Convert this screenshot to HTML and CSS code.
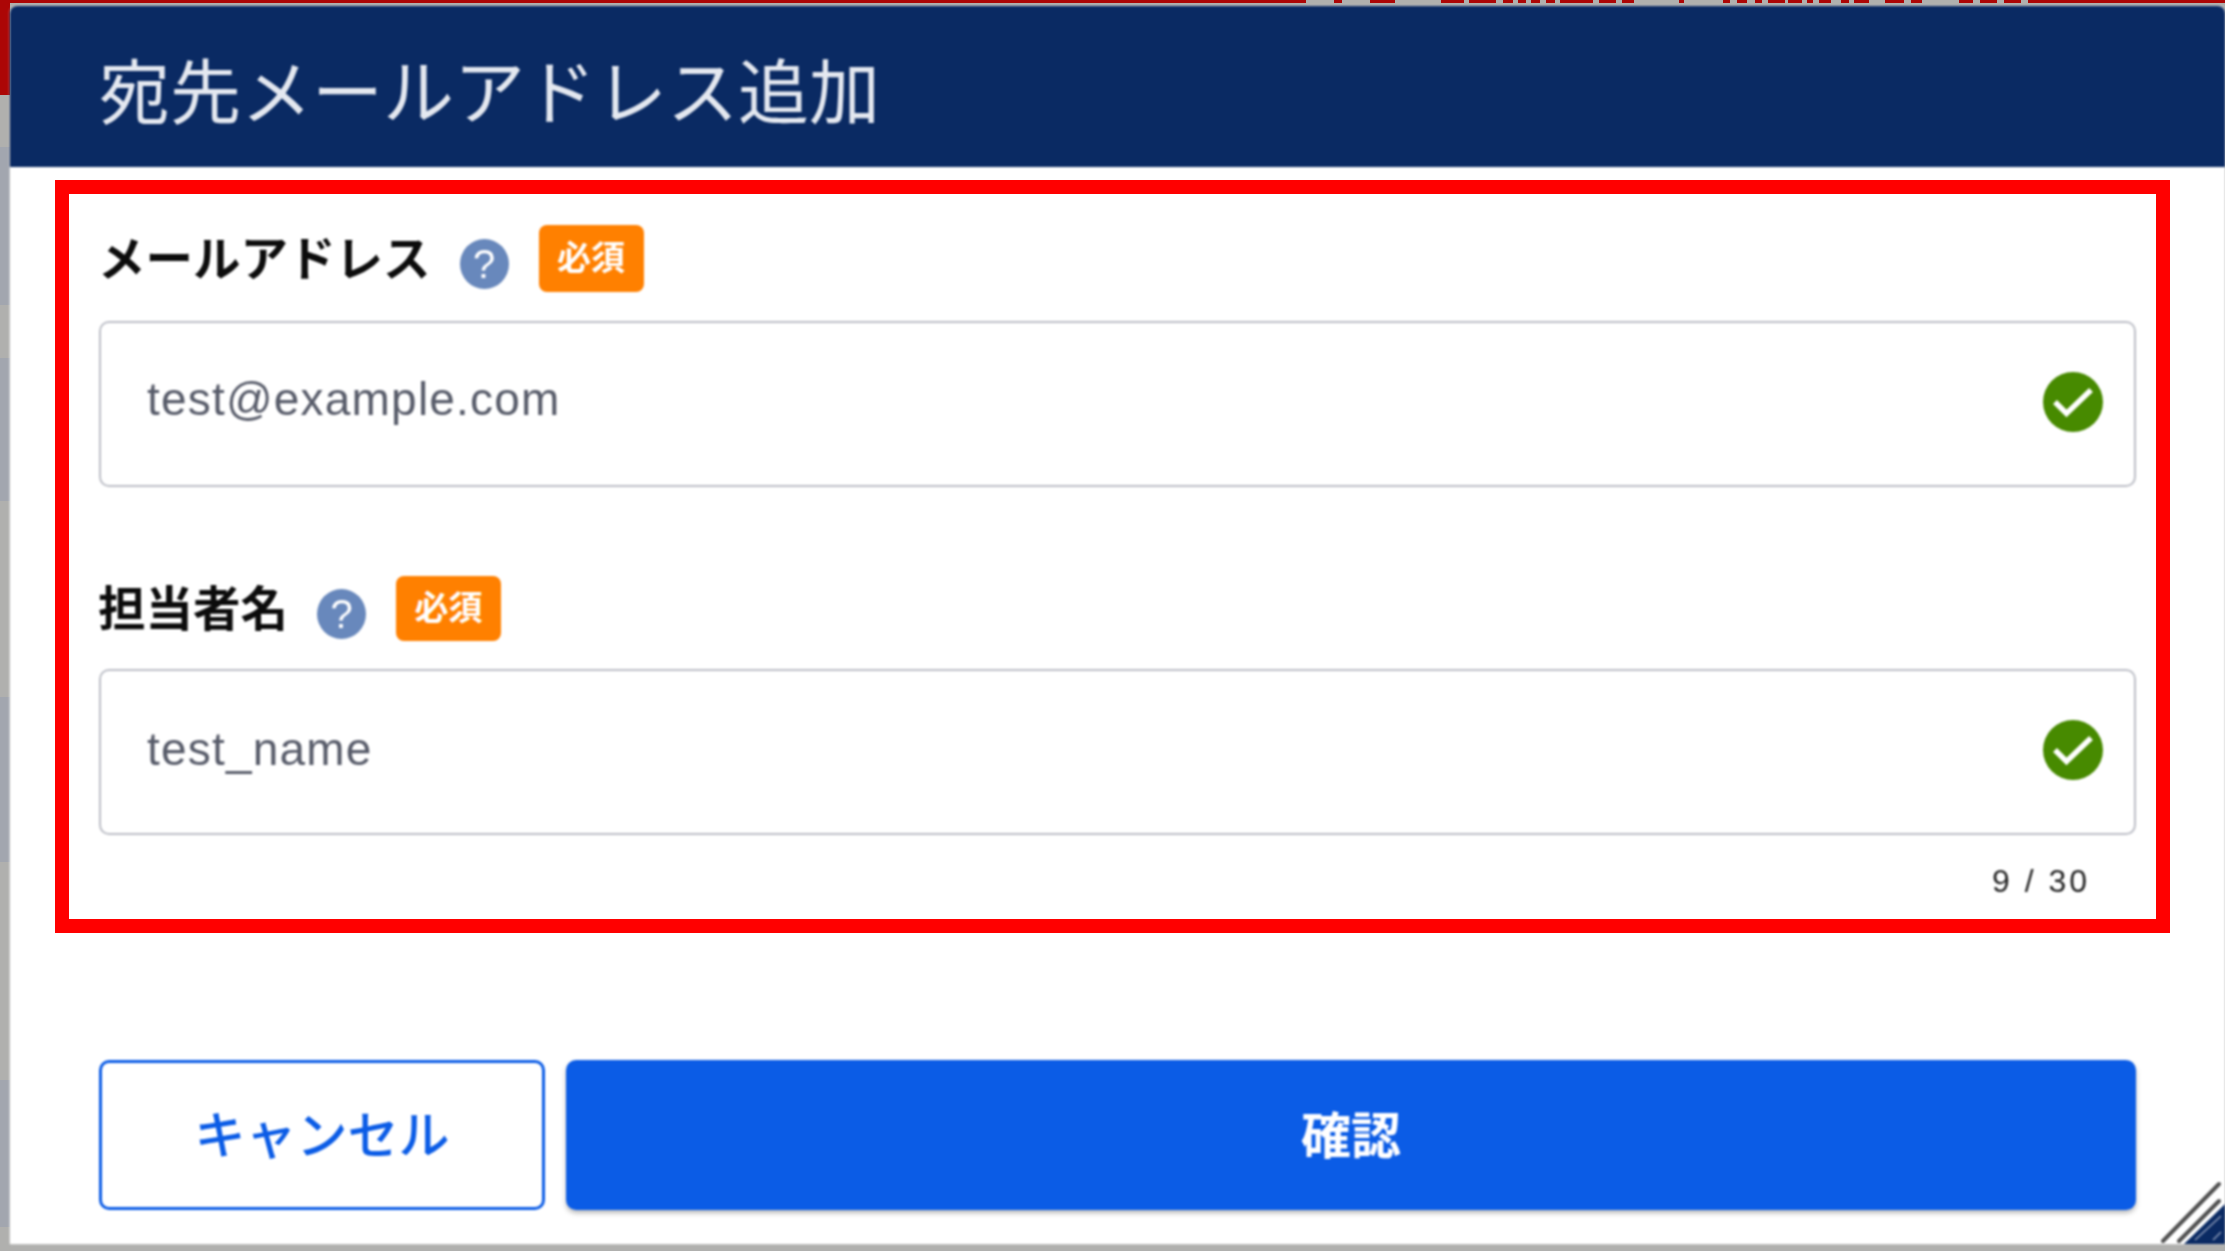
FILE: index.html
```html
<!DOCTYPE html>
<html lang="ja">
<head>
<meta charset="utf-8">
<title>宛先メールアドレス追加</title>
<link rel="stylesheet" href="styles.css">
</head>
<body>
<div class="screen">
  <svg class="backdrop" width="2225" height="1251" viewBox="0 0 2225 1251" aria-hidden="true">
    <rect width="2225" height="1251" fill="#b0b0ae"/>
    <g fill="#a2a6af">
      <rect y="147" width="10" height="158"/>
      <rect y="358" width="10" height="143"/>
      <rect y="697" width="10" height="165"/>
      <rect y="1080" width="10" height="147"/>
    </g>
    <g fill="#ac0606">
      <rect width="10" height="95"/>
      <rect width="1306" height="3"/>
      <rect x="1334" width="8" height="3"/><rect x="1370" width="25" height="3"/><rect x="1441" width="23" height="3"/>
      <rect x="1469" width="27" height="3"/><rect x="1503" width="10" height="3"/><rect x="1518" width="8" height="3"/>
      <rect x="1531" width="9" height="3"/><rect x="1546" width="9" height="3"/><rect x="1560" width="33" height="3"/>
      <rect x="1599" width="17" height="3"/><rect x="1622" width="12" height="3"/><rect x="1679" width="5" height="3"/>
      <rect x="1723" width="7" height="3"/><rect x="1737" width="10" height="3"/><rect x="1755" width="7" height="3"/>
      <rect x="1768" width="17" height="3"/><rect x="1788" width="14" height="3"/><rect x="1807" width="6" height="3"/>
      <rect x="1819" width="12" height="3"/><rect x="1841" width="8" height="3"/><rect x="1854" width="15" height="3"/>
      <rect x="1885" width="19" height="3"/><rect x="1911" width="11" height="3"/><rect x="1959" width="14" height="3"/>
      <rect x="1980" width="17" height="3"/><rect x="2004" width="17" height="3"/><rect x="2028" width="197" height="3"/>
    </g>
  </svg>

  <section class="dialog">
    <header class="dialog-head">
      <h1 class="dialog-title">宛先メールアドレス追加</h1>
    </header>
    <form class="dialog-body">
      <div class="field field-mail">
        <div class="label-row">
          <label class="label">メールアドレス</label>
          <span class="help">?</span>
          <span class="badge">必須</span>
        </div>
        <div class="input-box">
          <input class="input" type="text" value="test@example.com">
          <svg class="check" width="60" height="60" viewBox="0 0 60 60" aria-hidden="true">
            <circle cx="30" cy="30" r="30" fill="#478a00"/>
            <path d="M12 30 L23.500 41.500 L48 18" fill="none" stroke="#fff" stroke-width="5.500"/>
          </svg>
        </div>
      </div>
      <div class="field field-name">
        <div class="label-row">
          <label class="label">担当者名</label>
          <span class="help">?</span>
          <span class="badge">必須</span>
        </div>
        <div class="input-box">
          <input class="input" type="text" value="test_name">
          <svg class="check" width="60" height="60" viewBox="0 0 60 60" aria-hidden="true">
            <circle cx="30" cy="30" r="30" fill="#478a00"/>
            <path d="M12 30 L23.500 41.500 L48 18" fill="none" stroke="#fff" stroke-width="5.500"/>
          </svg>
        </div>
        <div class="counter">9 / 30</div>
      </div>
      <div class="actions">
        <button class="btn btn-cancel" type="button">キャンセル</button>
        <button class="btn btn-confirm" type="button">確認</button>
      </div>
    </form>
    <svg class="resize" width="64" height="64" viewBox="0 0 64 64" aria-hidden="true">
      <path d="M2 61 L58 4 M18 61 L58 21" stroke="#505050" stroke-width="4" stroke-linecap="round" fill="none"/>
      <path d="M23 64 L64 24 V64 Z" fill="#0a2a63"/>
      <path d="M34 60 L60 36 M52 60 L60 52" stroke="#8c9bb8" stroke-width="1.5" fill="none"/>
    </svg>
  </section>

  <div class="highlight"></div>
</div>
</body>
</html>
```

FILE: styles.css
```css
* { box-sizing: border-box; }
html, body { margin: 0; padding: 0; }
body {
  width: 2225px;
  height: 1251px;
  overflow: hidden;
  font-family: "Noto Sans CJK JP", "Liberation Sans", sans-serif;
}
.screen { position: relative; width: 2225px; height: 1251px; overflow: hidden; }
.backdrop { display: block; filter: blur(.6px); }

.dialog {
  position: absolute;
  left: 10px;
  top: 6px;
  right: 0;
  bottom: 7px;
  display: flex;
  flex-direction: column;
  background: #fff;
  border-radius: 7px 7px 0 0;
  box-shadow: 0 0 2px #e4e4e4;
  overflow: hidden;
  filter: blur(.8px);
}
.dialog-head {
  flex: none;
  height: 161px;
  padding: 0 0 0 89px;
  display: flex;
  align-items: center;
  background: #0a2a63;
}
.dialog-title {
  margin: 0;
  position: relative;
  top: 1px;
  font-size: 71px;
  font-weight: 400;
  line-height: 1;
  letter-spacing: 0;
  color: #e4e8f0;
}

.dialog-body {
  flex: 1;
  display: flex;
  flex-direction: column;
  padding: 58px 89px 34px 89px;
}
.field-mail { margin-bottom: 89px; }
.label-row {
  display: flex;
  align-items: center;
  height: 67px;
  margin-bottom: 29px;
}
.field-name .label-row {
  height: 65px;
  margin-bottom: 28px;
}
.label {
  font-size: 47.5px;
  font-weight: 700;
  line-height: 1;
  color: #0c0c0c;
  position: relative;
  top: -3px;
  left: -1px;
}
.help {
  width: 49px;
  height: 50px;
  margin: 0 30px 0 28px;
  position: relative;
  top: 5px;
  display: flex;
  align-items: center;
  justify-content: center;
  border-radius: 50%;
  background: #6888bc;
  color: #fff;
  font-family: "Liberation Sans", sans-serif;
  font-size: 40px;
  font-weight: 400;
  line-height: 1;
}
.badge {
  width: 105px;
  height: 100%;
  padding-bottom: 6px;
  display: flex;
  align-items: center;
  justify-content: center;
  border-radius: 8px;
  background: #ff8000;
  color: #fff;
  font-size: 34px;
  font-weight: 700;
  line-height: 1;
}
.input-box {
  height: 166px;
  display: flex;
  align-items: center;
  padding: 0 31px 0 46px;
  border: 2px solid #bcbec6;
  border-radius: 10px;
}
.input {
  flex: 1;
  min-width: 0;
  height: 100%;
  padding: 0 0 11px;
  border: 0;
  outline: 0;
  background: transparent;
  font-family: "Liberation Sans", sans-serif;
  font-size: 46px;
  letter-spacing: 1.2px;
  color: #585c6a;
}
.field-name .input { padding-bottom: 7px; }
.check { flex: none; margin-bottom: 4px; }
.counter {
  margin-top: 28px;
  padding-right: 46px;
  text-align: right;
  font-family: "Liberation Sans", sans-serif;
  font-size: 32px;
  line-height: 36px;
  letter-spacing: 3px;
  color: #222;
}
.actions {
  margin-top: auto;
  display: flex;
  gap: 21px;
}
.btn {
  height: 150px;
  border-radius: 10px;
  padding: 0 0 6px;
  font-family: "Noto Sans CJK JP", sans-serif;
  line-height: 1;
  cursor: pointer;
}
.btn-cancel {
  width: 446px;
  flex: none;
  background: #fff;
  border: 3px solid #0b5ce6;
  color: #0b5ce6;
  font-size: 51px;
  font-weight: 500;
}
.btn-confirm {
  flex: 1;
  border: 0;
  background: #0b5ce6;
  color: #fff;
  font-size: 50px;
  font-weight: 700;
  box-shadow: 0 3px 5px rgba(0, 0, 0, .28);
}
.resize {
  position: absolute;
  right: 0;
  bottom: 0;
}
.highlight {
  position: absolute;
  left: 55px;
  top: 180px;
  width: 2115px;
  height: 753px;
  border: 14px solid #ff0000;
  pointer-events: none;
}
```
